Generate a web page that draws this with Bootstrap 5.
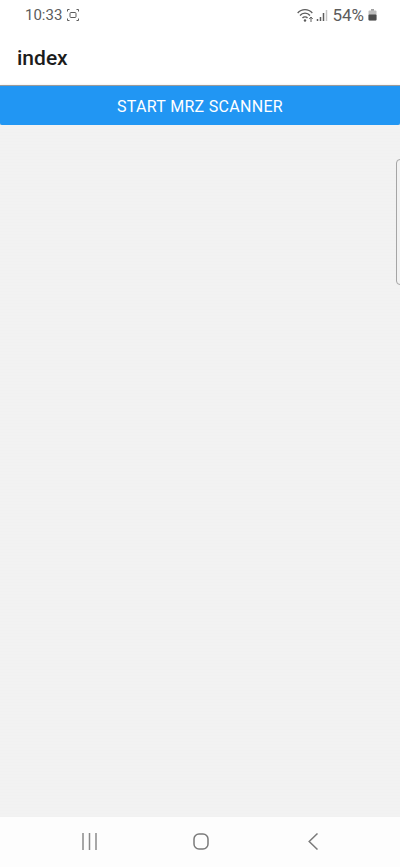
<!DOCTYPE html>
<html lang="en">
<head>
<meta charset="utf-8">
<title>index</title>
<link href="https://cdn.jsdelivr.net/npm/bootstrap@5.3.0/dist/css/bootstrap.min.css" rel="stylesheet">
<style>
html, body { height: 100%; }
body { font-family: Roboto, "Liberation Sans", sans-serif; background: #f2f2f2; overflow: hidden; }
.app-shell { height: 867px; }
.status-row { height: 33px; padding: 0 23px 3px 25px; color: #5c5c5c; font-size: 15px; }
.status-row svg { display: block; }
.status-left { gap: 5px; }
.status-pct { font-size: 17px; line-height: 1; }
.title-row { height: 52px; padding: 0 17px 2px; }
.title-text { font-size: 21px; font-weight: 500; color: #1c1c1c; line-height: 1; }
.top-block { background: #fff; }
.scan-btn { height: 40px; padding: 2px 0 0; background: #2196f3; border: 0; border-top: 1px solid #9a9a9a; border-radius: 0 0 2px 2px; color: #fff; font-size: 16px; font-weight: 400; letter-spacing: .3px; box-shadow: 0 1px 3px rgba(0,0,0,.25); }
.scan-btn:hover { background: #2196f3; color: #fff; }
.view-area { position: relative; background: #f2f2f2 repeating-linear-gradient(0deg, #f1f1f1 0, #f1f1f1 1px, #f2f2f2 1px, #f2f2f2 3px); }
.side-handle { position: absolute; top: 34px; right: -6px; width: 10px; height: 126px; border: 1px solid #a5a5a5; border-radius: 4px; background: #f2f2f2; }
.nav-row { height: 50px; background: #fdfdfd; padding: 0 0 1px 2px; }
.nav-cell { width: 112px; }
</style>
</head>
<body>
<div class="app-shell d-flex flex-column">
  <div class="top-block">
    <div class="status-row d-flex align-items-center justify-content-between">
      <div class="status-left d-flex align-items-center">
        <span>10:33</span>
        <svg width="12" height="12" viewBox="0 0 12 12" fill="none" stroke="#5c5c5c" stroke-width="1">
          <path d="M.5 2.500V.5H2.500M9.500 .5h2V2.500M11.500 9.500v2H9.500M2.500 11.500H.5V9.500"/>
          <rect x="3" y="3.500" width="6" height="5" rx="1"/>
        </svg>
      </div>
      <div class="d-flex align-items-center gap-1">
        <svg width="31" height="16" viewBox="0 0 31 16" fill="none" stroke="#5c5c5c">
          <path d="M.7 6a9.500 9.500 0 0 1 14.600 0M3 8.500a6.500 6.500 0 0 1 10 0M5.500 11a3.200 3.200 0 0 1 5 0" stroke-width="1.300"/>
          <circle cx="8" cy="13.500" r="1.200" fill="#5c5c5c" stroke="none"/>
          <path d="M14 15V10.500M12.300 12l1.700-2 1.700 2" stroke-width="1"/>
          <path d="M20.500 14v-2M23.500 14v-4M26.500 14V6" stroke-width="1.500"/>
          <path d="M29.500 14V3" stroke="#c4c4c4" stroke-width="1.500"/>
        </svg>
        <span class="status-pct">54%</span>
        <svg width="9" height="12" viewBox="0 0 9 12">
          <rect x="3" y="0" width="3" height="2" fill="#a0a0a0"/>
          <rect x="0.500" y="1.500" width="8" height="10" rx="1" fill="#bdbdbd"/>
          <rect x="0.500" y="5.500" width="8" height="6" rx="1" fill="#4c4c4c"/>
        </svg>
      </div>
    </div>
    <div class="title-row d-flex align-items-center"><span class="title-text">index</span></div>
  </div>
  <button type="button" class="btn scan-btn w-100 text-uppercase d-flex align-items-center justify-content-center">Start MRZ Scanner</button>
  <div class="view-area flex-grow-1"><div class="side-handle"></div></div>
  <div class="nav-row d-flex align-items-center justify-content-center">
    <div class="nav-cell d-flex justify-content-center">
      <svg width="15" height="17" viewBox="0 0 15 17" fill="none" stroke="#8a8a8a" stroke-width="1.500"><path d="M1 0v17M7.500 0v17M14 0v17"/></svg>
    </div>
    <div class="nav-cell d-flex justify-content-center">
      <svg width="16" height="17" viewBox="0 0 16 17" fill="none" stroke="#7a7a7a" stroke-width="1.500"><rect x="1" y="1" width="14" height="15" rx="5"/></svg>
    </div>
    <div class="nav-cell d-flex justify-content-center">
      <svg width="10" height="17" viewBox="0 0 10 17" fill="none" stroke="#7a7a7a" stroke-width="1.500"><path d="M9.500 .5 1.200 8.500 9.500 16.500"/></svg>
    </div>
  </div>
</div>
<script src="https://cdn.jsdelivr.net/npm/bootstrap@5.3.0/dist/js/bootstrap.bundle.min.js"></script>
</body>
</html>
